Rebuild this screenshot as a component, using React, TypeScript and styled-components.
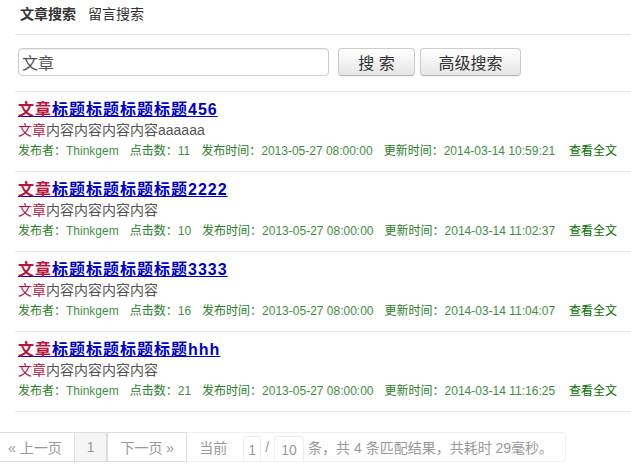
import React from "react"
import styled, { createGlobalStyle } from "styled-components"

const GlobalStyle = createGlobalStyle`
  html, body {
    margin: 0;
    padding: 0;
    background: #fff;
  }
  body {
    font-family: "Liberation Sans", "Noto Sans CJK SC", sans-serif;
    font-size: 14px;
    color: #333;
    overflow: hidden;
  }
`

const Page = styled.div`
  width: 631px;
  height: 465px;
  overflow: hidden;
`

const Main = styled.div`
  margin-left: 15px;
`

const Tabs = styled.div`
  display: flex;
  gap: 12px;
  padding: 4px 0 10px 5px;
  line-height: 20px;
  border-bottom: 1px solid #e8e8e8;
`

const Tab = styled.span<{ $active?: boolean }>`
  font-size: 14px;
  color: #333;
  font-weight: ${({ $active }) => ($active ? "bold" : "normal")};
`

const SearchForm = styled.form`
  display: flex;
  align-items: center;
  padding: 13px 0 15px 3px;
  border-bottom: 1px solid #e8e8e8;
`

const SearchInput = styled.input`
  box-sizing: border-box;
  width: 311px;
  height: 28px;
  padding: 0 3px;
  border: 1px solid #ccc;
  border-radius: 4px;
  box-shadow: inset 0 1px 1px rgba(0, 0, 0, 0.08);
  font-family: "Liberation Sans", "Noto Sans CJK SC", sans-serif;
  font-size: 16px;
  color: #555;
  outline: none;
`

const Button = styled.button<{ $width: number; $gap: number }>`
  box-sizing: border-box;
  width: ${({ $width }) => $width}px;
  height: 28px;
  margin-left: ${({ $gap }) => $gap}px;
  padding: 0;
  border: 1px solid #ccc;
  border-bottom-color: #b3b3b3;
  border-radius: 4px;
  background: linear-gradient(#ffffff, #e6e6e6);
  box-shadow: 0 1px 2px rgba(0, 0, 0, 0.05);
  font-family: "Liberation Sans", "Noto Sans CJK SC", sans-serif;
  font-size: 16px;
  color: #333;
  cursor: pointer;
`

const Item = styled.div`
  padding: 7px 0 9px 3px;
  border-bottom: 1px solid #e8e8e8;
`

const Title = styled.a`
  display: inline-block;
  line-height: 21px;
  font-size: 16px;
  font-weight: bold;
  letter-spacing: 1px;
  color: #0000cc;
  text-decoration: underline;
`

const Hit = styled.span`
  color: #c0103a;
`

const Content = styled.div`
  line-height: 21px;
  font-size: 14px;
  color: #555;
`

const Meta = styled.div`
  display: flex;
  line-height: 21px;
  font-size: 12px;
`

const Field = styled.span<{ $first?: boolean }>`
  margin-left: ${({ $first }) => ($first ? 0 : 11)}px;
  color: #2a7d2a;
`

const Value = styled.span`
  color: #3f8f3f;
`

const More = styled.a`
  margin-left: 14px;
  color: #007000;
  text-decoration: none;
`

const Pager = styled.div`
  display: flex;
  margin: 20px 0 0 -5px;
  height: 30px;
  font-size: 14px;
  color: #999;
`

const Cell = styled.span<{ $active?: boolean; $edge?: boolean }>`
  display: flex;
  align-items: center;
  padding: 0 12px;
  border: 1px solid #ddd;
  border-left-width: ${({ $edge }) => ($edge ? 1 : 0)}px;
  background: ${({ $active }) => ($active ? "#f5f5f5" : "#fff")};
`

const Info = styled.span`
  display: flex;
  align-items: center;
  width: 354px;
  padding: 0 12px;
  border: 1px solid #f0f0f0;
  border-left: 0;
  border-radius: 0 4px 4px 0;
  white-space: pre;
`

const PageBox = styled.span<{ $width: number; $left: number; $right: number }>`
  box-sizing: border-box;
  display: inline-flex;
  align-items: center;
  justify-content: center;
  width: ${({ $width }) => $width}px;
  height: 26px;
  margin: 4px ${({ $right }) => $right}px 0 ${({ $left }) => $left}px;
  border: 1px solid #eee;
  border-bottom: 0;
  border-radius: 3px 3px 0 0;
  color: #999;
`

type Result = {
  title: string
  body: string
  hits: number
  updated: string
}

const results: Result[] = [
  { title: "标题标题标题标题456", body: "内容内容内容内容aaaaaa", hits: 11, updated: "2014-03-14 10:59:21" },
  { title: "标题标题标题标题2222", body: "内容内容内容内容", hits: 10, updated: "2014-03-14 11:02:37" },
  { title: "标题标题标题标题3333", body: "内容内容内容内容", hits: 16, updated: "2014-03-14 11:04:07" },
  { title: "标题标题标题标题hhh", body: "内容内容内容内容", hits: 21, updated: "2014-03-14 11:16:25" },
]

const ResultItem = ({ title, body, hits, updated }: Result) => (
  <Item>
    <div>
      <Title href="#">
        <Hit>文章</Hit>
        {title}
      </Title>
    </div>
    <Content>
      <Hit>文章</Hit>
      {body}
    </Content>
    <Meta>
      <Field $first>
        发布者：<Value>Thinkgem</Value>
      </Field>
      <Field>
        点击数：<Value>{hits}</Value>
      </Field>
      <Field>
        发布时间：<Value>2013-05-27 08:00:00</Value>
      </Field>
      <Field>
        更新时间：<Value>{updated}</Value>
      </Field>
      <More href="#">查看全文</More>
    </Meta>
  </Item>
)

const App = () => (
  <Page>
    <GlobalStyle />
    <Main>
      <Tabs>
        <Tab $active>文章搜索</Tab>
        <Tab>留言搜索</Tab>
      </Tabs>
      <SearchForm onSubmit={(e) => e.preventDefault()}>
        <SearchInput defaultValue="文章" />
        <Button type="submit" $width={77} $gap={9}>
          搜 索
        </Button>
        <Button type="button" $width={101} $gap={5}>
          高级搜索
        </Button>
      </SearchForm>
      {results.map((r, i) => (
        <ResultItem key={i} {...r} />
      ))}
    </Main>
    <Pager>
      <Cell $edge>« 上一页</Cell>
      <Cell $active>1</Cell>
      <Cell $edge>下一页 »</Cell>
      <Info>
        当前
        <PageBox $width={18} $left={16} $right={4}>1</PageBox>/
        <PageBox $width={30} $left={5} $right={4}>10</PageBox>
        条，共 4 条匹配结果，共耗时 29毫秒。
      </Info>
    </Pager>
  </Page>
)

export default App
